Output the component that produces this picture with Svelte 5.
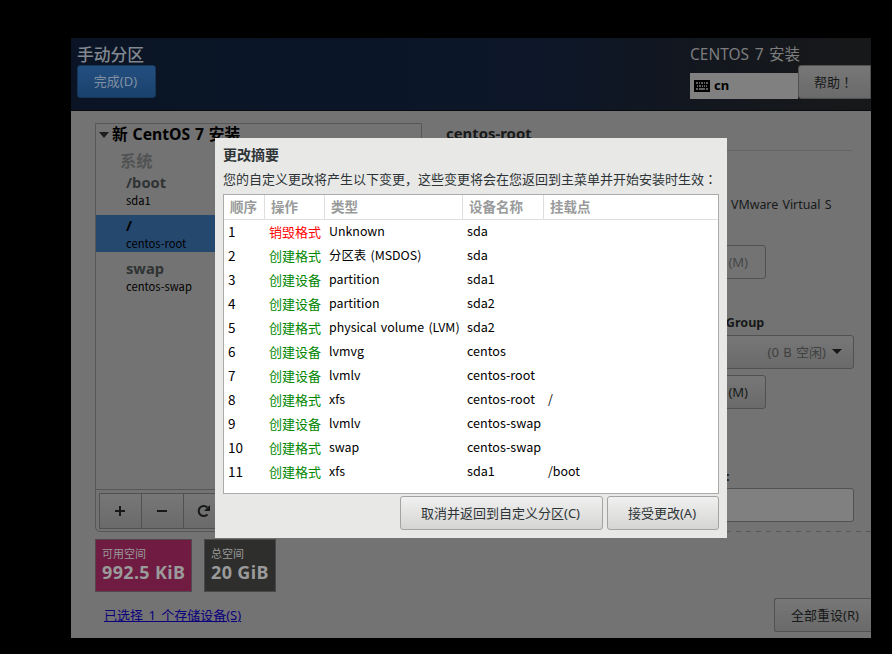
<script>
	const columns = ['顺序', '操作', '类型', '设备名称', '挂载点'];

	const changes = [
		{ action: '销毁格式', type: 'Unknown', device: 'sda', mount: '', destroy: true },
		{ action: '创建格式', type: '分区表 (MSDOS)', device: 'sda', mount: '' },
		{ action: '创建设备', type: 'partition', device: 'sda1', mount: '' },
		{ action: '创建设备', type: 'partition', device: 'sda2', mount: '' },
		{ action: '创建格式', type: 'physical volume (LVM)', device: 'sda2', mount: '' },
		{ action: '创建设备', type: 'lvmvg', device: 'centos', mount: '' },
		{ action: '创建设备', type: 'lvmlv', device: 'centos-root', mount: '' },
		{ action: '创建格式', type: 'xfs', device: 'centos-root', mount: '/' },
		{ action: '创建设备', type: 'lvmlv', device: 'centos-swap', mount: '' },
		{ action: '创建格式', type: 'swap', device: 'centos-swap', mount: '' },
		{ action: '创建格式', type: 'xfs', device: 'sda1', mount: '/boot' }
	];

	const mounts = [
		{ name: '/boot', device: 'sda1' },
		{ name: '/', device: 'centos-root' },
		{ name: 'swap', device: 'centos-swap' }
	];

	let selected = '/';
</script>

<main>
	<header>
		<div class="left">
			<h1>手动分区</h1>
			<button class="done">完成(D)</button>
		</div>
		<div class="right">
			<div class="product">CENTOS 7 安装</div>
			<div class="tools">
				<div class="keyboard">
					<svg width="16" height="12" viewBox="0 0 16 12">
						<rect width="16" height="12" fill="#000" />
						<path
							d="M2 3h2M5 3h1M7 3h2M10 3h1M12 3h2M3 6h1M5 6h2M8 6h1M10 6h1M12 6h1M2 9h2M5 9h6M12 9h2"
							stroke="#808080"
							stroke-width="1.6"
						/>
					</svg>
					<span>cn</span>
				</div>
				<button class="help">帮助<span class="punct">！</span></button>
			</div>
		</div>
	</header>

	<div class="content">
		<aside>
			<div class="tree">
				<div class="root">
					<svg width="10" height="6" viewBox="0 0 10 6"><path d="M0 0h10L5 6z" fill="#1c1e1e" /></svg>
					<b>新 CentOS 7 安装</b>
				</div>
				<div class="group">系统</div>
				{#each mounts as mount}
					<div class="mount" class:selected={mount.name === selected}>
						<b>{mount.name}</b>
						<span>{mount.device}</span>
					</div>
				{/each}
			</div>
			<div class="toolbar">
				<button>
					<svg width="12" height="12" viewBox="0 0 12 12"><path d="M6 1v10M1 6h10" /></svg>
				</button>
				<button>
					<svg width="12" height="12" viewBox="0 0 12 12"><path d="M1 6h10" /></svg>
				</button>
				<button>
					<svg width="14" height="14" viewBox="0 0 14 14">
						<path d="M10.5 10.3A5 5 0 1 1 10.3 3.5" />
						<path class="arrow" d="M13 1v6H7z" />
					</svg>
				</button>
			</div>
		</aside>

		<section>
			<h2>centos-root</h2>
			<p class="disk">VMware Virtual S</p>
			<button class="modify disabled">修改 (M)</button>
			<h3 class="vg">Volume Group</h3>
			<button class="combo">
				<span>(0 B 空闲)</span>
				<svg width="10" height="5" viewBox="0 0 10 5"><path d="M0 0h10L5 5z" fill="#151717" /></svg>
			</button>
			<button class="modify second">修改 (M)</button>
			<h3 class="name">名称:</h3>
			<div class="field"></div>
			<div class="divider"></div>
		</section>
	</div>

	<div class="spaces">
		<div class="space free"><span>可用空间</span><b>992.5 KiB</b></div>
		<div class="space total"><span>总空间</span><b>20 GiB</b></div>
	</div>
	<footer>
		<a href="#storage">已选择 1 个存储设备(S)</a>
		<button>全部重设(R)</button>
	</footer>

	<div class="dialog">
		<h4>更改摘要</h4>
		<p>
			您的自定义更改将产生以下变更，这些变更将会在您返回到主菜单并开始安装时生效<span class="punct">：</span>
		</p>
		<div class="table">
			<div class="row head">
				{#each columns as column}
					<span>{column}</span>
				{/each}
			</div>
			{#each changes as change, i}
				<div class="row">
					<span class="order">{i + 1}</span>
					<span class="action" class:destroy={change.destroy}>{change.action}</span>
					<span>{change.type}</span>
					<span class="device">{change.device}</span>
					<span>{change.mount}</span>
				</div>
			{/each}
		</div>
		<div class="actions">
			<button class="cancel">取消并返回到自定义分区(C)</button>
			<button class="accept">接受更改(A)</button>
		</div>
	</div>
</main>

<style>
	:global(body) {
		background: #000;
		overflow: hidden;
	}

	main {
		position: relative;
		box-sizing: border-box;
		width: 800px;
		height: 600px;
		margin: 38px 0 0 71px;
		overflow: hidden;
		background: #737373;
		color: #171919;
		font-family: 'Noto Sans', 'Noto Sans CJK SC', sans-serif;
		font-size: 13px;
	}

	main * {
		box-sizing: border-box;
		white-space: nowrap;
	}

	h1,
	h2,
	h3,
	h4,
	p {
		margin: 0;
	}

	button {
		display: flex;
		align-items: center;
		justify-content: center;
		padding: 0 2px 2px 0;
		border: 1px solid #505150;
		border-radius: 3px;
		background: linear-gradient(#777, #696a69);
		color: #171919;
		font: inherit;
	}

	/* full-width marks centred in their cell */
	.punct {
		font-family: 'Noto Sans CJK TC', sans-serif;
	}

	header {
		display: flex;
		justify-content: space-between;
		height: 73px;
		border-bottom: 1px solid #090a0d;
		background: linear-gradient(90deg, #0a1424, #0a1628 35%, #0d1728 60%, #13171e 80%, #171819);
	}

	.left {
		padding: 4px 0 0 6px;
	}

	h1 {
		height: 23px;
		color: #828890;
		font-size: 16.8px;
		font-weight: 500;
		line-height: 25px;
	}

	.done {
		width: 79px;
		height: 33px;
		border-color: #15365c;
		background: linear-gradient(#224f80, #1b416c);
		color: #8090a2;
	}

	.right {
		width: 181px;
	}

	.product {
		height: 27px;
		color: #7c7d7e;
		font-size: 15.5px;
		line-height: 33px;
		word-spacing: 1.5px;
	}

	.tools {
		display: flex;
	}

	.keyboard {
		display: flex;
		align-items: center;
		gap: 4px;
		width: 108px;
		height: 26px;
		margin-top: 8px;
		padding-left: 4px;
		background: #808080;
		color: #000;
		font-weight: bold;
	}

	.keyboard span {
		margin-top: -2px;
	}

	.help {
		width: 73px;
		height: 34px;
		border-radius: 3px 0 0 3px;
	}

	.content {
		display: flex;
		gap: 24px;
		height: 421px;
		padding: 12px 0 0 24px;
	}

	aside {
		width: 327px;
		height: 409px;
		border: 1px solid #565756;
		border-radius: 0 0 5px 5px;
	}

	.tree {
		height: 366px;
		border-bottom: 1px solid #565756;
	}

	.root {
		display: flex;
		align-items: center;
		gap: 3px;
		height: 23px;
		padding: 0 0 1px 3px;
		color: #000;
		font-size: 15.7px;
		word-spacing: 0.8px;
	}

	.root b {
		margin-top: -3px;
	}

	.group {
		height: 24px;
		padding-left: 24px;
		color: #515353;
		font-size: 16.3px;
		font-weight: 700;
		line-height: 29px;
	}

	.mount {
		display: flex;
		flex-direction: column;
		height: 43px;
		padding: 0 0 0 30px;
		color: #000;
	}

	.mount b {
		height: 21px;
		color: #303333;
		font-size: 14.7px;
		line-height: 22px;
	}

	.mount span {
		font-size: 11.2px;
		font-family: 'Noto Sans CJK SC', sans-serif;
		line-height: 16px;
	}

	.mount.selected {
		height: 37px;
		margin: 1px 0 5px;
		background: #25486f;
	}

	.mount.selected b {
		height: 20px;
		color: #000;
		line-height: 21px;
	}

	.toolbar {
		display: flex;
		padding: 3px;
	}

	.toolbar button {
		width: 43px;
		height: 36px;
		margin-right: -1px;
		padding-bottom: 0;
		border-radius: 0;
	}

	.toolbar path {
		fill: none;
		stroke: #171919;
		stroke-width: 2;
	}

	.toolbar .arrow {
		fill: #171919;
		stroke: none;
	}

	section {
		flex: 1;
		display: flex;
		flex-direction: column;
	}

	h2 {
		width: 406px;
		height: 28px;
		font-size: 14.9px;
		line-height: 20px;
		border-bottom: 1px solid #656565;
	}

	.disk {
		margin: 44px 0 0 285px;
		font-size: 12.4px;
		line-height: 20px;
		word-spacing: 1px;
	}

	.modify {
		width: 120px;
		height: 34px;
		margin: 30px 0 0 200px;
		padding-right: 17px;
		justify-content: flex-end;
	}

	.modify.disabled {
		background: #737373;
		color: #454747;
	}

	.vg {
		height: 56px;
		padding: 34px 0 0 229px;
		font-size: 12.6px;
		line-height: 20px;
	}

	.combo {
		width: 208px;
		height: 34px;
		margin-left: 200px;
		padding: 0 11px 1px 0;
		justify-content: flex-end;
		gap: 6px;
		color: #3e4040;
		word-spacing: 1px;
	}

	.modify.second {
		margin-top: 6px;
	}

	.name {
		height: 79px;
		padding: 57px 0 0 254px;
		line-height: 20px;
		font-size: 13px;
	}

	.field {
		width: 208px;
		height: 34px;
		margin-left: 200px;
		border: 1px solid #505150;
		border-radius: 3px;
		background: #808080;
	}

	.divider {
		height: 1px;
		margin-top: 9px;
		background: repeating-linear-gradient(90deg, #565756 0 5px, transparent 5px 10px);
	}

	.spaces {
		display: flex;
		gap: 12px;
		height: 60px;
		padding: 7px 0 1px 24px;
	}

	.space {
		display: flex;
		flex-direction: column;
		height: 53px;
		padding: 6px 0 0 6px;
		border: 1px solid #554650;
		color: #9a9a9a;
	}

	.space span {
		font-size: 11px;
		line-height: 16px;
	}

	.space b {
		font-size: 18px;
		letter-spacing: 0.35px;
		line-height: 21px;
	}

	.free {
		width: 97px;
		background: #6f1b42;
	}

	.total {
		width: 72px;
		border-color: #484848;
		background: #2e2e2c;
	}

	footer {
		display: flex;
		justify-content: space-between;
		padding: 6px 0 0 33px;
	}

	footer a {
		color: #0b007c;
		line-height: 34px;
		word-spacing: 2px;
	}

	footer button {
		width: 97px;
		height: 34px;
		padding-left: 6px;
		border-right: 0;
		border-radius: 3px 0 0 3px;
	}

	.dialog {
		position: absolute;
		top: 100px;
		left: 144px;
		width: 512px;
		height: 400px;
		padding: 6px 8px 0;
		background: #e8e8e7;
		color: #2e3436;
	}

	h4 {
		height: 24px;
		font-size: 14px;
		line-height: 22px;
	}

	.dialog p {
		height: 26px;
		line-height: 22px;
	}

	.table {
		width: 496px;
		height: 300px;
		border: 1px solid #a9aca8;
		background: #fff;
		color: #000;
	}

	.row {
		display: grid;
		grid-template-columns: 41px 60px 138px 81px 1fr;
		height: 24px;
		font-family: 'Noto Sans CJK SC', sans-serif;
		font-size: 12.4px;
		line-height: 22px;
		word-spacing: 1.5px;
	}

	.row span {
		padding-left: 4px;
	}

	.row .order {
		font-size: 13.5px;
	}

	.row .device {
		font-size: 12.6px;
	}

	.row .action {
		color: #008600;
		font-size: 13px;
		line-height: 23px;
	}

	.row .destroy {
		color: #f00;
	}

	.row.head {
		height: 25px;
		border-bottom: 1px solid #dedede;
		color: #999b9b;
		font-size: 13.5px;
		font-weight: bold;
		line-height: 22px;
	}

	.head span {
		padding-left: 6px;
		border-right: 1px solid #dedede;
	}

	.head span:last-child {
		border-right: 0;
	}

	.actions {
		display: flex;
		justify-content: flex-end;
		gap: 4px;
		padding-top: 2px;
	}

	.actions button {
		height: 34px;
		border-color: #a3a5a2;
		background: linear-gradient(#f0f0f0, #d5d5d3);
		color: #2e3436;
	}

	.cancel {
		width: 203px;
	}

	.accept {
		width: 112px;
	}
</style>
